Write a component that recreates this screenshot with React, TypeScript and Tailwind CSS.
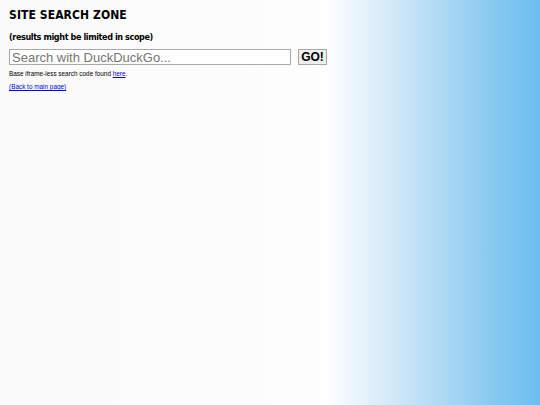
export default function App() {
  return (
    <div className="min-h-[405px] w-full bg-[linear-gradient(to_right,#fafafa_0%,#fdfdfd_58%,#ffffff_60%,#c9e5f6_75%,#8ccbf0_90%,#6bbdee_100%)] px-[9px] pt-[7px] font-['Liberation_Sans',sans-serif] text-black">
      <h1 className="font-['Comic_Sans_MS','DejaVu_Sans_Condensed',sans-serif] text-[12px] font-bold leading-[16px] tracking-[0.1px]">
        SITE SEARCH ZONE
      </h1>
      <h2 className="mt-[8px] font-['Comic_Sans_MS','DejaVu_Sans_Condensed',sans-serif] text-[9px] font-bold leading-[13px] tracking-[-0.4px]">
        (results might be limited in scope)
      </h2>
      <form className="mt-[5px] flex items-center gap-[7px]" onSubmit={(e) => e.preventDefault()}>
        <input
          type="text"
          placeholder="Search with DuckDuckGo..."
          className="h-[16px] w-[282px] border border-[#a9a9a9] bg-white px-[2px] text-[13px] leading-[14px] placeholder:text-[#757575] focus:outline-none"
        />
        <button
          type="submit"
          className="h-[16px] w-[29px] border border-[#a9a9a9] bg-[#efefef] text-[12px] font-bold leading-[14px]"
        >
          GO!
        </button>
      </form>
      <p className="mt-[4px] text-[6.4px] leading-[9px]">
        Base iframe-less search code found{" "}
        <a href="#" className="text-[#0000ee] underline">
          here
        </a>
        .
      </p>
      <p className="mt-[4px] text-[6.4px] leading-[9px]">
        <a href="#" className="text-[#0000ee] underline">
          (Back to main page)
        </a>
      </p>
    </div>
  );
}
